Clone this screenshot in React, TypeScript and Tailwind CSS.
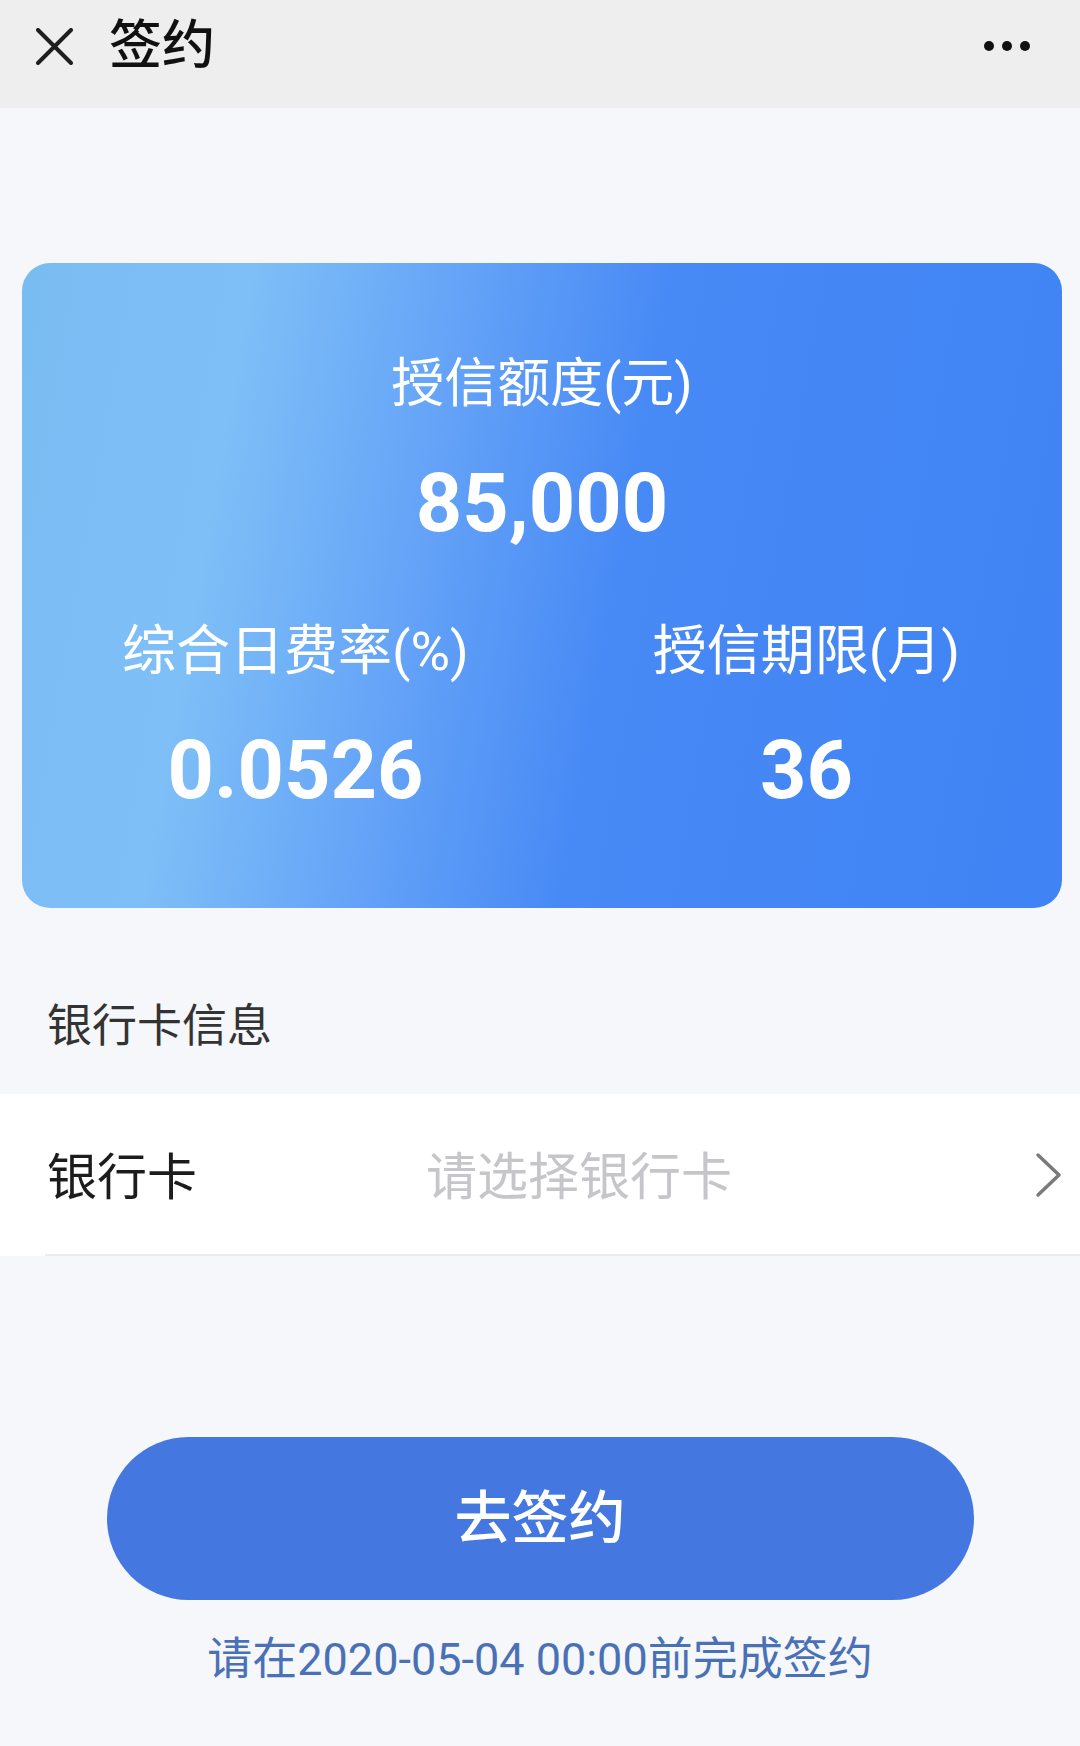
export default function App() {
  const cjk = "font-['Roboto','Noto_Sans_CJK_SC',sans-serif]";

  return (
    <div className={`min-h-[1746px] w-[1080px] bg-[#f5f7fb] ${cjk}`}>
      {/* Top bar */}
      <header className="flex h-[108px] items-center bg-[#efeeee] pb-[16px] pl-[36px] pr-[50px]">
        <svg width="37" height="37" viewBox="0 0 37 37" className="shrink-0">
          <path d="M2 2 L35 35 M35 2 L2 35" stroke="#1e1e1e" strokeWidth="4" strokeLinecap="round" />
        </svg>
        <h1 className="ml-[36px] text-[53px] leading-none font-medium text-[#111]">签约</h1>
        <div className="ml-auto flex items-center gap-[8px]">
          <span className="h-[10px] w-[10px] rounded-full bg-[#111]" />
          <span className="h-[10px] w-[10px] rounded-full bg-[#111]" />
          <span className="h-[10px] w-[10px] rounded-full bg-[#111]" />
        </div>
      </header>

      {/* Credit card */}
      <div className="pt-[155px] pl-[22px] pr-[18px]">
        <div className="flex flex-col items-center rounded-[28px] bg-[linear-gradient(100deg,#79bcf2_0%,#7ebff7_20%,#62a1f7_40%,#4789f5_57%,#3f83f4_100%)] pt-[91px] pb-[87px] text-white">
          <div className="text-[53px] leading-[60px]">授信额度(元)</div>
          <div className="mt-[40px] text-[81px] leading-[100px] font-bold">85,000</div>
          <div className="mt-[68px] grid w-full grid-cols-2 pl-[18px]">
            <div className="flex flex-col items-center">
              <div className="text-[54px] leading-[60px]">综合日费率(%)</div>
              <div className="mt-[39px] text-[81px] leading-[100px] font-bold">0.0526</div>
            </div>
            <div className="flex flex-col items-center">
              <div className="text-[54px] leading-[60px]">授信期限(月)</div>
              <div className="mt-[39px] text-[81px] leading-[100px] font-bold">36</div>
            </div>
          </div>
        </div>
      </div>

      {/* Bank card info */}
      <div className="pt-[89px] pb-[37px] pl-[47px] text-[45px] leading-[60px] text-[#333]">银行卡信息</div>
      <div className="bg-white pl-[45px]">
        <div className="flex h-[162px] items-center border-b-2 border-[#ececec] pt-[8px] pl-[2px] pr-[18px]">
          <span className="w-[379px] text-[50px] text-[#1c1c1c]">银行卡</span>
          <span className="text-[51px] text-[#c6c6ca]">请选择银行卡</span>
          <svg width="27" height="46" viewBox="0 0 27 46" className="ml-auto -mt-[6px]">
            <polyline points="3,3 24,23 3,43" fill="none" stroke="#7a7a7a" strokeWidth="3.5" strokeLinecap="round" strokeLinejoin="round" />
          </svg>
        </div>
      </div>

      {/* Action */}
      <div className="flex flex-col items-center pt-[181px]">
        <button className="h-[163px] w-[867px] rounded-full bg-[#4478e0] text-[57px] font-medium text-white">去签约</button>
        <p className="mt-[32px] text-[45px] leading-[56px] text-[#4a71b6]">请在2020-05-04 00:00前完成签约</p>
      </div>
    </div>
  );
}
